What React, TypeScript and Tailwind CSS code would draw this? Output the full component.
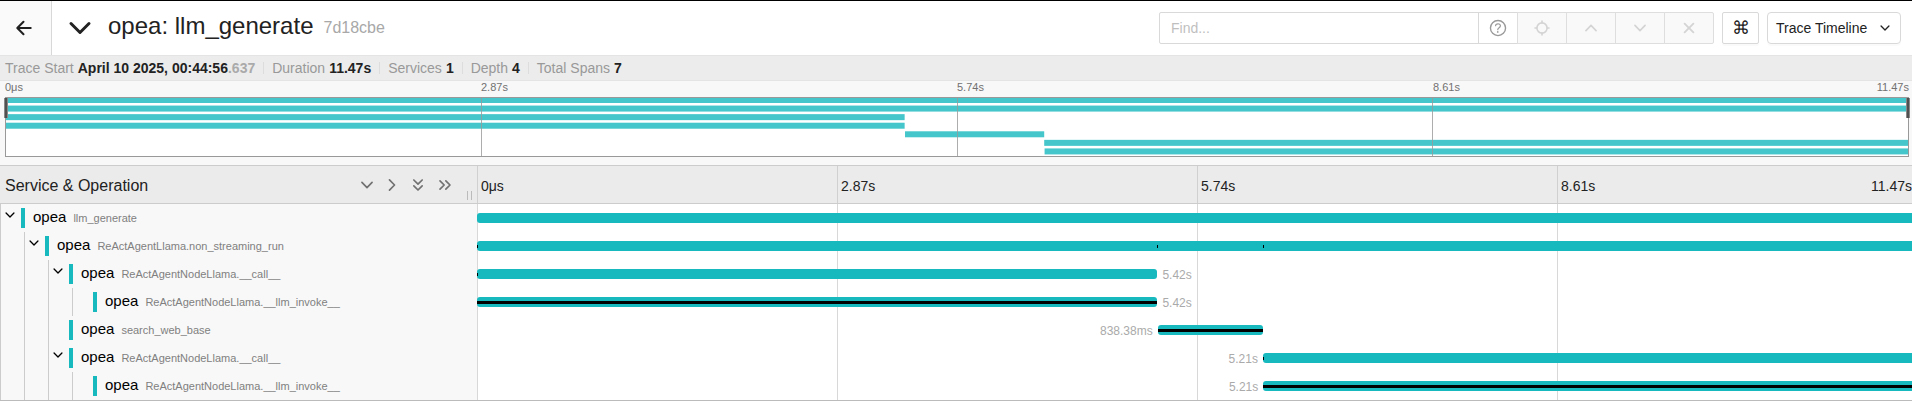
import type { ReactNode } from 'react';
import { IoArrowBack, IoChevronDown, IoChevronForward, IoChevronUp, IoClose, IoHelpCircleOutline } from 'react-icons/io5';
import { LuChevronsDown, LuChevronsRight } from 'react-icons/lu';

type Span = {
  depth: number;
  operation: string;
  start: number;
  end: number;
  expandable?: boolean;
  label?: string;
  labelSide?: 'left' | 'right';
  critical?: boolean;
  marks?: number[];
};

const SPANS: Span[] = [
  { depth: 0, operation: 'llm_generate', start: 0, end: 100, expandable: true },
  { depth: 1, operation: 'ReActAgentLlama.non_streaming_run', start: 0, end: 100, expandable: true, marks: [0, 47.23, 54.58] },
  { depth: 2, operation: 'ReActAgentNodeLlama.__call__', start: 0, end: 47.25, expandable: true, label: '5.42s', labelSide: 'right', marks: [0] },
  { depth: 3, operation: 'ReActAgentNodeLlama.__llm_invoke__', start: 0, end: 47.25, label: '5.42s', labelSide: 'right', critical: true },
  { depth: 2, operation: 'search_web_base', start: 47.27, end: 54.58, label: '838.38ms', labelSide: 'left', critical: true },
  { depth: 2, operation: 'ReActAgentNodeLlama.__call__', start: 54.58, end: 100, expandable: true, label: '5.21s', labelSide: 'left', marks: [54.58] },
  { depth: 3, operation: 'ReActAgentNodeLlama.__llm_invoke__', start: 54.6, end: 100, label: '5.21s', labelSide: 'left', critical: true },
];

const TICKS = ['0μs', '2.87s', '5.74s', '8.61s'];
const END_TICK = '11.47s';

function LocateIcon() {
  return (
    <svg width="16" height="16" viewBox="0 0 16 16" fill="none" stroke="currentColor" strokeWidth="1.6" strokeLinecap="round">
      <circle cx="8" cy="8" r="5.1" />
      <path d="M8 1v1.9M8 13.1V15M1 8h1.9M13.1 8H15" />
    </svg>
  );
}

function ToolButton({ label, children }: { label: string; children: ReactNode }) {
  return (
    <button
      type="button"
      disabled
      aria-label={label}
      className="-ml-px flex h-8 w-[50px] items-center justify-center border border-[#dedede] bg-[#f9f9f9] text-[#d4d4d4] last:rounded-r-xs"
    >
      {children}
    </button>
  );
}

function Header() {
  return (
    <header className="flex h-[55px] items-stretch border-b border-[#e4e4e4] bg-white">
      <a href="#search" aria-label="Back" className="flex w-[52px] items-center justify-center border-r border-[#d8d8d8] bg-[#fafafa] pr-1 text-[#202020]">
        <IoArrowBack size={22} />
      </a>
      <button type="button" className="flex items-center pl-3 text-[#222]">
        <IoChevronDown size={32} className="mr-3" />
        <h1 className="pb-1 text-[24px] leading-8">opea: llm_generate</h1>
        <small className="ml-[10px] text-base text-[#a8a8a8]">7d18cbe</small>
      </button>
      <div className="ml-auto flex items-center pr-[11px]">
        <input
          type="text"
          aria-label="Find"
          placeholder="Find..."
          className="h-8 w-80 rounded-l-xs border border-[#d9d9d9] px-[11px] text-sm placeholder:text-[#bfbfbf]"
        />
        <button type="button" aria-label="Search help" className="-ml-px flex h-8 w-10 items-center justify-center border border-[#d9d9d9] text-[#999]">
          <IoHelpCircleOutline size={22} />
        </button>
        <div className="flex">
          <ToolButton label="Locate"><LocateIcon /></ToolButton>
          <ToolButton label="Previous result"><IoChevronUp size={18} /></ToolButton>
          <ToolButton label="Next result"><IoChevronDown size={18} /></ToolButton>
          <ToolButton label="Clear search"><IoClose size={20} /></ToolButton>
        </div>
        <button type="button" aria-label="Keyboard shortcuts" className="ml-2 flex h-8 w-[37px] items-center justify-center rounded-xs border border-[#d9d9d9] text-[18px] text-[#222] shadow-[0_2px_0_rgba(0,0,0,0.02)]">
          ⌘
        </button>
        <button type="button" className="ml-2 flex h-8 w-[134px] items-center justify-between rounded border border-[#d9d9d9] pr-2 pl-2 text-sm text-[#222] shadow-[0_2px_0_rgba(0,0,0,0.02)]">
          Trace Timeline
          <IoChevronDown size={14} />
        </button>
      </div>
    </header>
  );
}

function Overview() {
  const items: [string, ReactNode][] = [
    ['Trace Start', <>April 10 2025, 00:44:56<span className="text-[#aaa]">.637</span></>],
    ['Duration', '11.47s'],
    ['Services', '1'],
    ['Depth', '4'],
    ['Total Spans', '7'],
  ];
  return (
    <ul className="flex h-[25px] items-center border-b border-[#e4e4e4] bg-[#ececec] pl-[5px] text-sm">
      {items.map(([name, value], i) => (
        <li key={name} className={i < items.length - 1 ? 'mr-2 flex h-3 items-center gap-1 border-r border-[#ddd] pr-2' : 'flex h-3 items-center gap-1'}>
          <span className="text-[#999]">{name}</span>
          <strong className="text-[#222]">{value}</strong>
        </li>
      ))}
    </ul>
  );
}

function MiniMap() {
  return (
    <section aria-label="Trace overview" className="border-b border-[#ccc] bg-[#f8f8f8] pr-[3px] pb-2 pl-[5px]">
      <div className="flex h-4 text-[11px] leading-[13px] text-[#717171]">
        {TICKS.map((t, i) => (
          <span key={t} className={i === 3 ? 'flex flex-1 justify-between' : 'flex-1'}>
            <span>{t}</span>
            {i === 3 && <span>{END_TICK}</span>}
          </span>
        ))}
      </div>
      <div className="relative h-[60px]">
        <svg className="block h-full w-full bg-white" viewBox="0 0 100 60" preserveAspectRatio="none">
          {SPANS.map((s, i) => (
            <rect key={i} x={s.start} y={(i * 60) / 7} width={s.end - s.start} height={6} fill="#45c6cb" />
          ))}
        </svg>
        <div className="absolute inset-0 flex border border-[#999]">
          {TICKS.map((t) => (
            <span key={t} className="flex-1 border-r border-[#999]/80 last:border-r-0" />
          ))}
        </div>
        <span className="absolute top-px -left-px h-5 w-1 border-x border-[#888] bg-[#505050]" />
        <span className="absolute top-px -right-px h-5 w-1 border-x border-[#888] bg-[#505050]" />
      </div>
    </section>
  );
}

function TimelineHeader() {
  return (
    <div className="flex h-[38px] border-b border-[#ccc] bg-[#ebebeb]">
      <div className="flex w-[calc(25%-1px)] items-center pl-[5px]">
        <h2 className="flex-1 pt-0.5 text-base text-[#222]">Service &amp; Operation</h2>
        <div className="flex items-center gap-[7px] pr-3 text-[#717171]">
          <button type="button" aria-label="Expand one level"><IoChevronDown size={18} /></button>
          <button type="button" aria-label="Collapse one level"><IoChevronForward size={18} /></button>
          <button type="button" aria-label="Expand all"><LuChevronsDown size={20} /></button>
          <button type="button" aria-label="Collapse all"><LuChevronsRight size={20} /></button>
        </div>
        <span className="mr-[5px] mb-[3px] h-[9px] w-[5px] self-end border-x border-[#bbb]" />
      </div>
      <div className="-mr-[5px] flex flex-1 text-sm text-[#222]">
        {TICKS.map((t, i) => (
          <span key={t} className="flex flex-1 items-center justify-between border-l border-[#d0d0d0] pt-0.5 pl-[3px]">
            <span>{t}</span>
            {i === 3 && <span className="pr-[5px]">{END_TICK}</span>}
          </span>
        ))}
      </div>
    </div>
  );
}

function SpanRow({ span }: { span: Span }) {
  const label = <span className="px-[5px] pt-0.5 text-xs leading-[26px] text-[#aaa]">{span.label}</span>;
  return (
    <div className="flex h-7">
      <div className="flex w-[calc(25%-1px)] bg-[#f8f8f8]">
        {Array.from({ length: span.depth }, (_, i) => (
          <span key={i} className="w-6 shrink-0 border-l border-[#ccc]" />
        ))}
        <span className="flex w-[21px] shrink-0 border-l border-[#ccc] pt-1 pl-0.5">
          {span.expandable && (
            <button type="button" aria-label="Toggle children" className="h-[14px] text-black"><IoChevronDown size={14} /></button>
          )}
        </span>
        <a href="#span" className="flex items-center">
          <span className="mr-2 h-5 w-1 bg-[#17b8be]" />
          <span className="flex items-baseline gap-[7px] pb-0.5 text-[15px] leading-5 text-black">
            opea
            <small className="text-[11px] text-[#808080]">{span.operation}</small>
          </span>
        </a>
      </div>
      <div className="relative -mr-[5px] flex flex-1 items-center bg-white">
        <div className="absolute inset-0 flex">
          {TICKS.map((t) => (
            <span key={t} className="flex-1 border-l border-[#d8d8d8]" />
          ))}
        </div>
        <div className="relative flex w-full items-center">
          <div className="flex justify-end" style={{ width: `${span.start}%` }}>{span.labelSide === 'left' && label}</div>
          <div className="flex h-[10px] items-center rounded-[3px] bg-[#17b8be]" style={{ width: `${span.end - span.start}%` }}>
            {span.critical && <span className="h-[3px] w-full bg-black" />}
          </div>
          {span.labelSide === 'right' && label}
          {span.marks?.map((m) => (
            <span key={m} className="absolute h-[3px] w-px bg-black" style={{ left: `${m}%` }} />
          ))}
        </div>
      </div>
    </div>
  );
}

export default function App() {
  return (
    <div className="overflow-hidden border-t border-black bg-white font-['Liberation_Sans',Arial,sans-serif]">
      <Header />
      <Overview />
      <MiniMap />
      <TimelineHeader />
      <main className="border-b border-[#bbb]">
        {SPANS.map((s, i) => (
          <SpanRow key={i} span={s} />
        ))}
      </main>
    </div>
  );
}
